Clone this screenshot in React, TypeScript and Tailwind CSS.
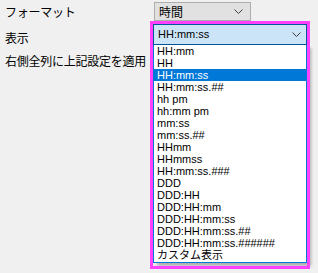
import React from 'react';

const items = [
  'HH:mm',
  'HH',
  'HH:mm:ss',
  'HH:mm:ss.##',
  'hh pm',
  'hh:mm pm',
  'mm:ss',
  'mm:ss.##',
  'HHmm',
  'HHmmss',
  'HH:mm:ss.###',
  'DDD',
  'DDD:HH',
  'DDD:HH:mm',
  'DDD:HH:mm:ss',
  'DDD:HH:mm:ss.##',
  'DDD:HH:mm:ss.######',
  'カスタム表示',
];

function Chevron() {
  return (
    <svg width="9" height="5" viewBox="0 0 9 5" className="shrink-0">
      <polyline points="0.5,0.5 4.5,4.5 8.5,0.5" fill="none" stroke="#404040" strokeWidth="1" />
    </svg>
  );
}

export default function App() {
  const selected = 'HH:mm:ss';

  return (
    <div
      className="w-[318px] h-[273px] bg-[#f0f0f0] flex overflow-hidden text-black"
      style={{ fontFamily: '"Liberation Sans", "Noto Sans CJK JP", sans-serif' }}
    >
      {/* labels */}
      <div className="w-[150px] pl-[5px] flex flex-col text-[12px] leading-[12px] tracking-[-0.25px] font-['Noto_Sans_CJK_JP',sans-serif]">
        <div className="mt-[6px]">フォーマット</div>
        <div className="mt-[14px]">表示</div>
        <div className="mt-[11px] whitespace-nowrap">右側全列に上記設定を適用</div>
      </div>

      {/* controls */}
      <div className="flex flex-col pt-[2px]">
        <div className="ml-[4px] w-[97px] h-[19px] bg-[#e1e1e1] border border-[#adadad] flex items-center justify-between pl-[4px] pr-[7px] text-[12px] font-['Noto_Sans_CJK_JP',sans-serif]">
          <span>時間</span>
          <Chevron />
        </div>

        <div className="relative mt-[3px] ml-[3px] w-[154px]">
          <div className="h-[21px] bg-[#cce4f7] border border-[#005499] flex items-center justify-between pl-[4px] pr-[5px] text-[11px]">
            <span>{selected}</span>
            <Chevron />
          </div>
          <div className="h-[218px] bg-white border border-[#0078d7] border-t-0 shadow-[4px_3px_3px_rgba(0,0,0,0.28)] flex flex-col text-[11px] leading-[12px]">
            {items.map((it) => (
              <div
                key={it}
                className={
                  'h-[12px] pl-[3px] whitespace-nowrap ' +
                  (it === selected ? 'bg-[#0078d7] text-white' : '')
                }
              >
                {it}
              </div>
            ))}
          </div>
          <div className="absolute -left-[3px] -top-[3px] w-[160px] h-[248px] border-[3px] border-[#ff40ff] pointer-events-none" />
        </div>
      </div>
    </div>
  );
}
